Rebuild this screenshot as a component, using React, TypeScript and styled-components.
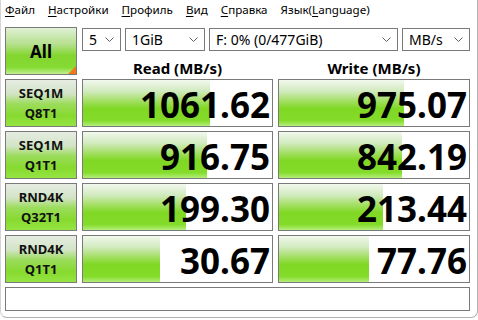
import React from 'react'
import styled, { createGlobalStyle } from 'styled-components'

const GlobalStyle = createGlobalStyle`
  html, body {
    margin: 0;
    padding: 0;
    background: #ffffff;
  }
  body {
    font-family: 'Noto Sans', 'Open Sans', Arial, sans-serif;
    color: #000;
  }
`

const Window = styled.div`
  width: 478px;
  height: 318px;
  box-sizing: border-box;
  border-right: 1px solid #b0b0b0;
  border-bottom: 1px solid #b0b0b0;
  border-left: 1px solid #d4d4d4;
  border-radius: 0 0 7px 7px;
  background: #fff;
  overflow: hidden;
`

const MenuBar = styled.div`
  display: flex;
  height: 20px;
  padding-left: 4px;
  gap: 13px;
  align-items: center;
  font-size: 11.6px;
  line-height: 18px;
  padding-bottom: 1px;
  box-sizing: border-box;
`

const MenuItem = styled.span`
  white-space: nowrap;
  u {
    text-decoration: underline;
    text-underline-offset: 2px;
  }
`

const TopSection = styled.div`
  display: flex;
  gap: 5px;
  padding: 7px 0 0 4px;
`

const AllButton = styled.div`
  position: relative;
  width: 72px;
  height: 48px;
  box-sizing: border-box;
  border: 1px solid #7a7a7a;
  background: linear-gradient(
    to bottom,
    #e0f0d6 0%,
    #b6e08e 35%,
    #82d62e 60%,
    #86da34 86%,
    #c2f090 100%
  );
  display: flex;
  align-items: center;
  justify-content: center;
  font-weight: 700;
  font-size: 17px;
`

const Corner = styled.div`
  position: absolute;
  right: 0;
  bottom: 0;
  width: 0;
  height: 0;
  border-left: 8px solid transparent;
  border-bottom: 8px solid #f07818;
`

const RightCol = styled.div`
  display: flex;
  flex-direction: column;
  width: 388px;
`

const ComboRow = styled.div`
  display: flex;
  gap: 4px;
  margin-top: 1px;
  height: 23px;
`

const Combo = styled.div<{ $w: number }>`
  width: ${({ $w }) => $w}px;
  height: 23px;
  box-sizing: border-box;
  border: 1px solid #7a7a7a;
  background: #fff;
  display: flex;
  align-items: center;
  justify-content: space-between;
  padding: 0 6px 0 6px;
  font-size: 14px;
  white-space: nowrap;
`

const HeaderRow = styled.div`
  display: grid;
  grid-template-columns: 191px 192px;
  column-gap: 5px;
  height: 24px;
  align-items: end;
`

const Header = styled.div`
  text-align: center;
  font-weight: 700;
  font-size: 15px;
  line-height: 18px;
  margin-bottom: -2px;
`

const Results = styled.div`
  display: grid;
  grid-template-columns: 72px 191px 192px;
  grid-template-rows: repeat(4, 48px) 24px;
  column-gap: 5px;
  row-gap: 4px;
  padding: 4px 0 0 4px;
`

const TestButton = styled.div`
  box-sizing: border-box;
  border: 1px solid #7a7a7a;
  background: linear-gradient(
    to bottom,
    #e6ece2 0%,
    #d2e4c6 30%,
    #9cdc5c 52%,
    #86da2e 78%,
    #96e444 100%
  );
  display: flex;
  flex-direction: column;
  align-items: center;
  justify-content: center;
  font-weight: 700;
  font-size: 13px;
  line-height: 20px;
  color: #111;
`

const Meter = styled.div`
  position: relative;
  box-sizing: border-box;
  border: 1px solid #7a7a7a;
  background: #fff;
  display: flex;
  align-items: center;
  justify-content: flex-end;
  padding: 3px 2px 0 0;
`

const Fill = styled.div`
  position: absolute;
  left: 0;
  top: 0;
  bottom: 0;
  background: linear-gradient(
    to bottom,
    #f2f8ee 0%,
    #d0eabc 25%,
    #9ede5a 48%,
    #80d824 62%,
    #84dc2a 88%,
    #b4ee7a 100%
  );
`

const Value = styled.span`
  position: relative;
  font-weight: 700;
  font-size: 35px;
  line-height: 1;
  letter-spacing: 0;
`

const Comment = styled.div`
  grid-column: 1 / -1;
  box-sizing: border-box;
  border: 1px solid #7a7a7a;
  background: #fff;
`

const Chevron = () => (
  <svg width="9" height="5" viewBox="0 0 9 5">
    <polyline points="0.5,0.5 4.5,4.5 8.5,0.5" fill="none" stroke="#606060" strokeWidth="1" />
  </svg>
)

const rows = [
  { a: 'SEQ1M', b: 'Q8T1', read: 1061.62, write: 975.07 },
  { a: 'SEQ1M', b: 'Q1T1', read: 916.75, write: 842.19 },
  { a: 'RND4K', b: 'Q32T1', read: 199.3, write: 213.44 },
  { a: 'RND4K', b: 'Q1T1', read: 30.67, write: 77.76 },
]

// bar length follows a log scale, like the original meter
const barWidth = (v: number) => Math.max(0, Math.round(28.5 + 32.4 * Math.log10(v)))

const Bar = ({ value }: { value: number }) => (
  <Meter>
    <Fill style={{ width: barWidth(value) }} />
    <Value>{value.toFixed(2)}</Value>
  </Meter>
)

export default function App() {
  return (
    <Window>
      <GlobalStyle />
      <MenuBar>
        <MenuItem><u>Ф</u>айл</MenuItem>
        <MenuItem><u>Н</u>астройки</MenuItem>
        <MenuItem><u>П</u>рофиль</MenuItem>
        <MenuItem><u>В</u>ид</MenuItem>
        <MenuItem><u>С</u>правка</MenuItem>
        <MenuItem>Язык(<u>L</u>anguage)</MenuItem>
      </MenuBar>
      <TopSection>
        <AllButton>
          All
          <Corner />
        </AllButton>
        <RightCol>
          <ComboRow>
            <Combo $w={39}>5<Chevron /></Combo>
            <Combo $w={80}>1GiB<Chevron /></Combo>
            <Combo $w={189}>F: 0% (0/477GiB)<Chevron /></Combo>
            <Combo $w={68}>MB/s<Chevron /></Combo>
          </ComboRow>
          <HeaderRow>
            <Header>Read (MB/s)</Header>
            <Header>Write (MB/s)</Header>
          </HeaderRow>
        </RightCol>
      </TopSection>
      <Results>
        {rows.map((r, i) => (
          <React.Fragment key={i}>
            <TestButton>
              <span>{r.a}</span>
              <span>{r.b}</span>
            </TestButton>
            <Bar value={r.read} />
            <Bar value={r.write} />
          </React.Fragment>
        ))}
        <Comment />
      </Results>
    </Window>
  )
}
